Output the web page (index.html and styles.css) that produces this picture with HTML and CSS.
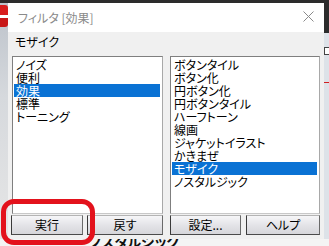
FILE: index.html
```html
<!DOCTYPE html>
<html lang="ja">
<head>
<meta charset="utf-8">
<title>フィルタ [効果]</title>
<link rel="stylesheet" href="styles.css">
</head>
<body>
<div class="screen">
  <div class="top-strip"></div>
  <div class="left-side"><div class="app-icon"></div></div>
  <div class="dialog">
    <div class="titlebar">
      <span class="title">フィルタ [効果]</span>
      <svg class="close" width="11" height="11" viewBox="0 0 11 11"><path d="M0.5 0.5 L10.5 10.5 M10.5 0.5 L0.5 10.5" stroke="#8a8a8a" stroke-width="1" fill="none"/></svg>
    </div>
    <div class="body">
      <div class="label">モザイク</div>
      <div class="columns">
        <div class="col">
          <ul class="list">
            <li>ノイズ</li>
            <li>便利</li>
            <li class="sel">効果</li>
            <li>標準</li>
            <li>トーニング</li>
          </ul>
          <div class="buttons left-buttons">
            <button class="btn">実行</button>
            <button class="btn">戻す</button>
          </div>
        </div>
        <div class="col">
          <ul class="list">
            <li>ボタンタイル</li>
            <li>ボタン化</li>
            <li>円ボタン化</li>
            <li>円ボタンタイル</li>
            <li>ハーフトーン</li>
            <li>線画</li>
            <li>ジャケットイラスト</li>
            <li>かきまぜ</li>
            <li class="sel">モザイク</li>
            <li>ノスタルジック</li>
          </ul>
          <div class="buttons right-buttons">
            <button class="btn">設定...</button>
            <button class="btn">ヘルプ</button>
          </div>
        </div>
      </div>
    </div>
  </div>
  <div class="right-side"><div class="mini-icon"></div><div class="red-line"></div></div>
  <div class="bottom-strip"><span class="behind-text">ノスタルジック</span></div>
  <div class="highlight-ring"></div>
</div>
</body>
</html>
```

FILE: styles.css
```css
* { box-sizing: border-box; }
html, body { margin: 0; padding: 0; }
body {
  width: 329px;
  height: 246px;
  overflow: hidden;
  background: #f2f2f2;
  font-family: "Noto Sans CJK JP", "Noto Sans", sans-serif;
  font-feature-settings: "palt";
}
.screen {
  position: relative;
  width: 329px;
  height: 246px;
  display: grid;
  grid-template-columns: 8px 316px 5px;
  grid-template-rows: 3px 236px 7px;
}
.top-strip {
  grid-column: 1 / 4;
  grid-row: 1;
  background: #2c2c2c;
}
.left-side {
  grid-column: 1;
  grid-row: 2;
  background: linear-gradient(#bcc2ca, #d6d9dd 40%, #e6e6e6);
  display: flex;
  flex-direction: column;
}
.app-icon {
  height: 22px;
  margin-top: 2px;
  background: linear-gradient(#d81e1e 0 45%, #ffffff 45% 60%, #c81818 60%);
  border-radius: 0 3px 3px 0;
}
.right-side {
  grid-column: 3;
  grid-row: 2;
  background: linear-gradient(#2c2c2c 0 30px, #dde2e8 30px);
  display: flex;
  flex-direction: column;
  padding-top: 44px;
}
.mini-icon {
  height: 8px;
  border: 1px solid #444;
  border-right: none;
  background: #fff;
}
.red-line {
  height: 1px;
  margin-top: 27px;
  background: #d02020;
}
.bottom-strip {
  grid-column: 1 / 4;
  grid-row: 3;
  background: #f4f4f4;
  overflow: hidden;
}
.behind-text {
  display: block;
  margin-left: 90px;
  margin-top: -6px;
  font-size: 14px;
  line-height: 16px;
  font-weight: bold;
  color: #111;
}
.dialog {
  grid-column: 2;
  grid-row: 2;
  display: flex;
  flex-direction: column;
  background: #f0f0f0;
}
.titlebar {
  height: 30px;
  background: #ffffff;
  display: flex;
  align-items: center;
  justify-content: space-between;
  padding: 0 10px 0 10px;
}
.title {
  font-size: 12px;
  color: #8a8a8a;
  line-height: 14px;
}
.close { display: block; margin-top: -2px; }
.body {
  flex: 1;
  display: flex;
  flex-direction: column;
  padding: 0 4px 4px 4px;
}
.label {
  height: 24px;
  padding: 3px 0 0 3px;
  font-size: 12px;
  line-height: 13px;
  color: #000;
}
.columns {
  flex: 1;
  display: grid;
  grid-template-columns: 151px 150px;
  column-gap: 7px;
}
.col {
  display: flex;
  flex-direction: column;
  gap: 1px;
}
.list {
  list-style: none;
  margin: 0;
  height: 158px;
  padding: 1px 2px 0 1px;
  background: #ffffff;
  border: 1px solid #7f7f7f;
  border-right-color: #a8a8a8;
  border-bottom-color: #c8c8c8;
}
.list li {
  height: 13px;
  line-height: 13px;
  font-size: 12px;
  padding-left: 2px;
  color: #000;
  white-space: nowrap;
}
.list li.sel {
  background: #0a72d4;
  color: #ffffff;
}
.buttons {
  display: grid;
  column-gap: 4px;
  height: 20px;
}
.left-buttons { grid-template-columns: 72px 1fr; margin-left: -1px; }
.right-buttons { grid-template-columns: 71px 1fr; column-gap: 5px; }
.btn {
  margin: 0;
  padding: 0;
  font-family: "Noto Sans CJK JP", "Noto Sans", sans-serif;
  font-feature-settings: "palt";
  font-size: 12px;
  line-height: 14px;
  color: #000;
  background: linear-gradient(#f6f6f8, #e4e4e8 50%, #d6d6da);
  border: 1px solid #8c8c8c;
  border-left-color: #3a3a3a;
  border-bottom-color: #4a4a4a;
  border-top-color: #b4b4b4;
  border-right-color: #6a6a6a;
}
.highlight-ring {
  position: absolute;
  left: 1px;
  top: 199px;
  width: 94px;
  height: 46px;
  border: 5px solid #e3121c;
  border-radius: 13px;
}
```
